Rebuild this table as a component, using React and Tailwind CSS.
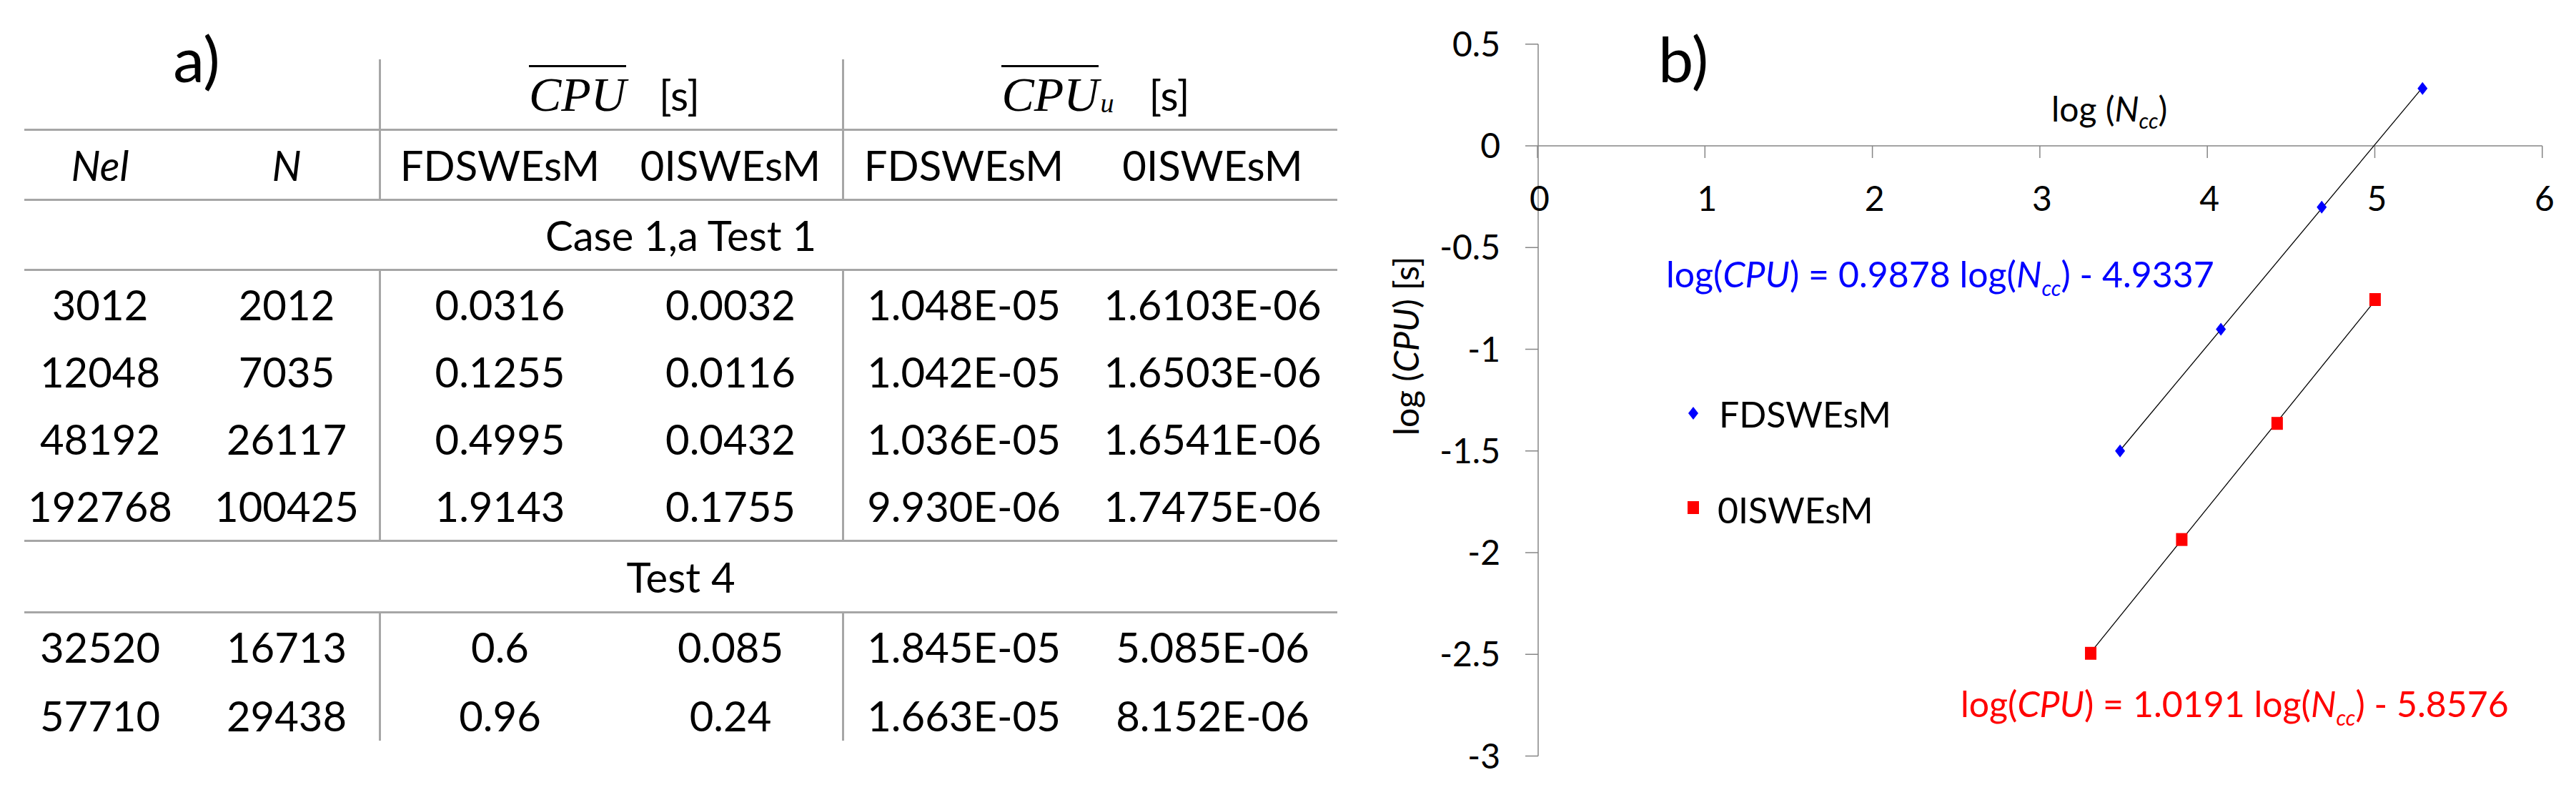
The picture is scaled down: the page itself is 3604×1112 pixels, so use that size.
const COLS = "grid grid-cols-[212px_284px_336px_312px_338px_355px]";
const LINE = "border-[#a6a6a6]";

const blocks = [
  {
    label: "Case 1,a Test 1",
    rows: [
      ["3012", "2012", "0.0316", "0.0032", "1.048E-05", "1.6103E-06"],
      ["12048", "7035", "0.1255", "0.0116", "1.042E-05", "1.6503E-06"],
      ["48192", "26117", "0.4995", "0.0432", "1.036E-05", "1.6541E-06"],
      ["192768", "100425", "1.9143", "0.1755", "9.930E-06", "1.7475E-06"],
    ],
  },
  {
    label: "Test 4",
    rows: [
      ["32520", "16713", "0.6", "0.085", "1.845E-05", "5.085E-06"],
      ["57710", "29438", "0.96", "0.24", "1.663E-05", "8.152E-06"],
    ],
  },
];

function Row({ cells, className = "h-[94px]", align = "items-center" }) {
  const base = `flex justify-center ${align}`;
  return (
    <div className={`${COLS} ${className}`}>
      <div className={base}>{cells[0]}</div>
      <div className={`${base} pl-[26px]`}>{cells[1]}</div>
      <div className={`${base} border-l-[3px] ${LINE}`}>{cells[2]}</div>
      <div className={base}>{cells[3]}</div>
      <div className={`${base} border-l-[3px] ${LINE}`}>{cells[4]}</div>
      <div className={`${base} pl-[6px]`}>{cells[5]}</div>
    </div>
  );
}

function CpuHeader({ sub }) {
  return (
    <div className="flex items-baseline">
      <span className="border-t-[3px] border-black font-['Liberation_Serif',serif] text-[68px] italic leading-[76px]">
        CPU
      </span>
      {sub && (
        <span className="ml-[2px] translate-y-[2px] font-['Liberation_Serif',serif] text-[38px] italic leading-none">
          u
        </span>
      )}
      <span className={sub ? "ml-[49px]" : "ml-[46px]"}>[s]</span>
    </div>
  );
}

function Table() {
  return (
    <div className="w-[1837px] text-[58px] leading-[70px]">
      <div className={`grid h-[100px] grid-cols-[496px_648px_693px] border-b-[3px] ${LINE}`}>
        <div className="flex items-start justify-center pr-[14px]">
          <span className="-mt-[46px] text-[88px] leading-none">a)</span>
        </div>
        <div className={`flex items-end justify-center border-l-[3px] pb-[10px] pl-[8px] ${LINE}`}>
          <CpuHeader />
        </div>
        <div className={`flex items-end justify-center border-l-[3px] pb-[10px] pl-[14px] ${LINE}`}>
          <CpuHeader sub />
        </div>
      </div>

      <div className={`border-b-[3px] ${LINE}`}>
        <Row
          className="h-[95px]"
          cells={[
            <i key="nel">Nel</i>,
            <i key="n">N</i>,
            "FDSWEsM",
            "0ISWEsM",
            "FDSWEsM",
            "0ISWEsM",
          ]}
        />
      </div>

      {blocks.map((block, b) => (
        <div key={block.label}>
          <div
            className={`flex items-center justify-center border-b-[3px] ${LINE} ${
              b === 0 ? "h-[98px]" : "h-[100px]"
            }`}
          >
            {block.label}
          </div>
          <div className={b === 0 ? `border-b-[3px] ${LINE}` : ""}>
            {block.rows.map((r, i) => {
              const isLast = b === 1 && i === block.rows.length - 1;
              return (
                <Row
                  key={r[0]}
                  cells={r}
                  className={isLast ? "h-[73px]" : "h-[94px]"}
                  align={isLast ? "items-start pt-[14px]" : "items-center"}
                />
              );
            })}
          </div>
        </div>
      ))}
    </div>
  );
}

// chart coordinates are page pixels (viewBox starts where the table column ends)
const X = (u) => 2151 + 234.3 * u;
const Y = (v) => 204 - 284.5 * v;

const blue = [
  [3.4789, -1.5003],
  [4.0809, -0.9014],
  [4.683, -0.3014],
  [5.285, 0.282],
];
const red = [
  [3.3036, -2.4949],
  [3.8473, -1.9355],
  [4.4169, -1.3645],
  [5.0018, -0.7557],
];

function Diamond({ x, y, fill }) {
  return <polygon points={`${x},${y - 9} ${x + 7},${y} ${x},${y + 9} ${x - 7},${y}`} fill={fill} />;
}

function Square({ x, y }) {
  return <rect x={x - 8} y={y - 9} width="16" height="18" fill="#ff0000" />;
}

function Equation({ x, y, color, slope, icpt }) {
  return (
    <text x={x} y={y} fill={color} fontSize="50">
      log(<tspan fontStyle="italic">CPU</tspan>) = {slope} log(
      <tspan fontStyle="italic">N</tspan>
      <tspan fontStyle="italic" fontSize="30" dy="12">cc</tspan>
      <tspan dy="-12">) - {icpt}</tspan>
    </text>
  );
}

function Chart() {
  const yTicks = [0.5, 0, -0.5, -1, -1.5, -2, -2.5, -3];
  const xTicks = [0, 1, 2, 3, 4, 5, 6];
  const blueLine = [3.4789, 5.285];
  const redLine = [3.3036, 5.0018];
  return (
    <svg
      width="1733"
      height="1112"
      viewBox="1871 0 1733 1112"
      className="shrink-0 font-['Lato',sans-serif]"
    >
      <text x="2320" y="115" fontSize="88">b)</text>

      <line x1="2152" y1={Y(0.5)} x2="2152" y2={Y(-3)} stroke="#868686" strokeWidth="1.5" />
      <line x1="2152" y1={Y(0)} x2={X(6)} y2={Y(0)} stroke="#868686" strokeWidth="1.5" />
      {yTicks.map((v) => (
        <g key={v}>
          <line x1="2134" y1={Y(v)} x2="2152" y2={Y(v)} stroke="#868686" strokeWidth="1.5" />
          <text x="2099" y={Y(v) + 17} fontSize="48" textAnchor="end">
            {v}
          </text>
        </g>
      ))}
      {xTicks.map((u) => (
        <g key={u}>
          <line x1={X(u)} y1={Y(0)} x2={X(u)} y2={Y(0) + 17} stroke="#868686" strokeWidth="1.5" />
          <text x={X(u) + 3} y="295" fontSize="48" textAnchor="middle">
            {u}
          </text>
        </g>
      ))}

      <text x="2870" y="170" fontSize="48">
        log (<tspan fontStyle="italic">N</tspan>
        <tspan fontStyle="italic" fontSize="30" dy="10">cc</tspan>
        <tspan dy="-10">)</tspan>
      </text>
      <text transform="translate(1985 484) rotate(-90)" fontSize="48" textAnchor="middle">
        log (<tspan fontStyle="italic">CPU</tspan>) [s]
      </text>

      <line
        x1={X(blueLine[0])}
        y1={Y(0.9878 * blueLine[0] - 4.9337)}
        x2={X(blueLine[1])}
        y2={Y(0.9878 * blueLine[1] - 4.9337)}
        stroke="#000"
        strokeWidth="1.3"
      />
      <line
        x1={X(redLine[0])}
        y1={Y(1.0191 * redLine[0] - 5.8576)}
        x2={X(redLine[1])}
        y2={Y(1.0191 * redLine[1] - 5.8576)}
        stroke="#000"
        strokeWidth="1.3"
      />
      {blue.map(([u, v]) => (
        <Diamond key={u} x={X(u)} y={Y(v)} fill="#0000ff" />
      ))}
      {red.map(([u, v]) => (
        <Square key={u} x={X(u)} y={Y(v)} />
      ))}

      <Diamond x={2369} y={578} fill="#0000ff" />
      <text x="2405" y="598" fontSize="50">FDSWEsM</text>
      <Square x={2369} y={710} />
      <text x="2403" y="732" fontSize="50">0ISWEsM</text>

      <Equation x={2331} y={402} color="#0000ff" slope="0.9878" icpt="4.9337" />
      <Equation x={2743} y={1003} color="#ff0000" slope="1.0191" icpt="5.8576" />
    </svg>
  );
}

export default function App() {
  return (
    <div className="flex h-[1112px] w-[3604px] overflow-hidden bg-white font-['Lato',sans-serif] text-black">
      <div className="w-[1871px] shrink-0 pl-[34px] pt-[83px]">
        <Table />
      </div>
      <Chart />
    </div>
  );
}
